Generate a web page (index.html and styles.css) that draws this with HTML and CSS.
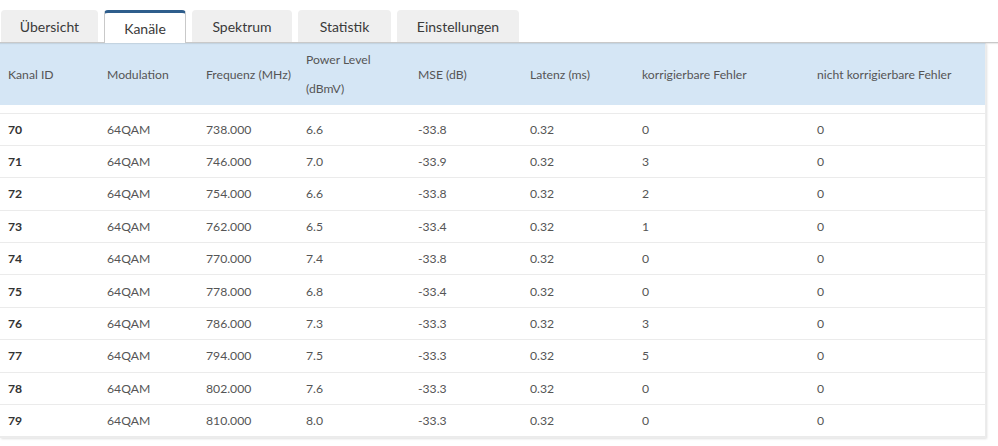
FILE: index.html
```html
<!DOCTYPE html>
<html lang="de">
<head>
<meta charset="utf-8">
<title>Kanäle</title>
<link rel="stylesheet" href="styles.css">
</head>
<body>
<div class="page">
  <nav class="tabs">
    <div class="tab t1">Übersicht</div>
    <div class="tab t2 active">Kanäle</div>
    <div class="tab t3">Spektrum</div>
    <div class="tab t4">Statistik</div>
    <div class="tab t5">Einstellungen</div>
  </nav>
  <div class="panel">
    <table class="grid">
      <colgroup>
        <col class="c1"><col class="c2"><col class="c3"><col class="c4"><col class="c5"><col class="c6"><col class="c7"><col class="c8">
      </colgroup>
      <thead>
        <tr>
          <th>Kanal ID</th><th>Modulation</th><th>Frequenz (MHz)</th><th>Power Level<br>(dBmV)</th><th>MSE (dB)</th><th>Latenz (ms)</th><th>korrigierbare Fehler</th><th>nicht korrigierbare Fehler</th>
        </tr>
      </thead>
      <tbody>
        <tr class="spacer"><td colspan="8"></td></tr>
        <tr><td class="id">70</td><td>64QAM</td><td>738.000</td><td>6.6</td><td>-33.8</td><td>0.32</td><td>0</td><td>0</td></tr>
        <tr><td class="id">71</td><td>64QAM</td><td>746.000</td><td>7.0</td><td>-33.9</td><td>0.32</td><td>3</td><td>0</td></tr>
        <tr><td class="id">72</td><td>64QAM</td><td>754.000</td><td>6.6</td><td>-33.8</td><td>0.32</td><td>2</td><td>0</td></tr>
        <tr><td class="id">73</td><td>64QAM</td><td>762.000</td><td>6.5</td><td>-33.4</td><td>0.32</td><td>1</td><td>0</td></tr>
        <tr><td class="id">74</td><td>64QAM</td><td>770.000</td><td>7.4</td><td>-33.8</td><td>0.32</td><td>0</td><td>0</td></tr>
        <tr><td class="id">75</td><td>64QAM</td><td>778.000</td><td>6.8</td><td>-33.4</td><td>0.32</td><td>0</td><td>0</td></tr>
        <tr><td class="id">76</td><td>64QAM</td><td>786.000</td><td>7.3</td><td>-33.3</td><td>0.32</td><td>3</td><td>0</td></tr>
        <tr><td class="id">77</td><td>64QAM</td><td>794.000</td><td>7.5</td><td>-33.3</td><td>0.32</td><td>5</td><td>0</td></tr>
        <tr><td class="id">78</td><td>64QAM</td><td>802.000</td><td>7.6</td><td>-33.3</td><td>0.32</td><td>0</td><td>0</td></tr>
        <tr><td class="id">79</td><td>64QAM</td><td>810.000</td><td>8.0</td><td>-33.3</td><td>0.32</td><td>0</td><td>0</td></tr>
      </tbody>
    </table>
  </div>
</div>
</body>
</html>
```

FILE: styles.css
```css
* { box-sizing: border-box; }
html, body { margin: 0; padding: 0; background: #fff; }
body {
  font-family: "Lato", "Source Sans Pro", "Liberation Sans", sans-serif;
  color: #555;
  width: 998px;
  height: 446px;
  overflow: hidden;
}
.page { padding-top: 10px; }

.tabs {
  display: flex;
  gap: 6px;
  padding-left: 1px;
  height: 33px;
  border-bottom: 1px solid #c9c9c9;
  box-shadow: 0 1px 1px rgba(0,0,0,0.08);
  position: relative;
  z-index: 1;
}
.tab {
  height: 32px;
  background: #efefef;
  border-radius: 4px 4px 0 0;
  font-size: 14px;
  color: #3a3a3a;
  display: flex;
  align-items: center;
  justify-content: center;
}
.tab.active {
  background: #fff;
  border: 1px solid #c9c9c9;
  border-top: 3px solid #2f5e8c;
  border-bottom: none;
  height: 33px;
  margin-bottom: -1px;
}
.t1 { width: 97px; }
.t2 { width: 82px; }
.t3 { width: 100px; }
.t4 { width: 93px; }
.t5 { width: 122px; }

.panel {
  width: 986px;
  background: #fff;
  box-shadow: 1px 1px 2px rgba(0,0,0,0.12);
  border-right: 1px solid #ececec;
  border-bottom: 1px solid #ececec;
}
.grid {
  width: 985px;
  border-collapse: collapse;
  table-layout: fixed;
  font-size: 12.2px;
}
.c1 { width: 99px; }
.c2 { width: 99px; }
.c3 { width: 100px; }
.c4 { width: 112px; }
.c5 { width: 112px; }
.c6 { width: 112px; }
.c7 { width: 175px; }
.c8 { width: 176px; }

.grid th {
  background: #d5e6f5;
  font-weight: normal;
  text-align: left;
  padding: 2px 8px;
  line-height: 29px;
  height: 62px;
  color: #555;
  white-space: nowrap;
}
.grid .spacer td {
  height: 8px;
  padding: 0;
}
.grid td {
  padding: 0 8px;
  height: 32.4px;
  border-bottom: 1px solid #ebebeb;
  color: #555;
  white-space: nowrap;
}
.grid td.id {
  font-weight: bold;
  color: #333;
}
```
